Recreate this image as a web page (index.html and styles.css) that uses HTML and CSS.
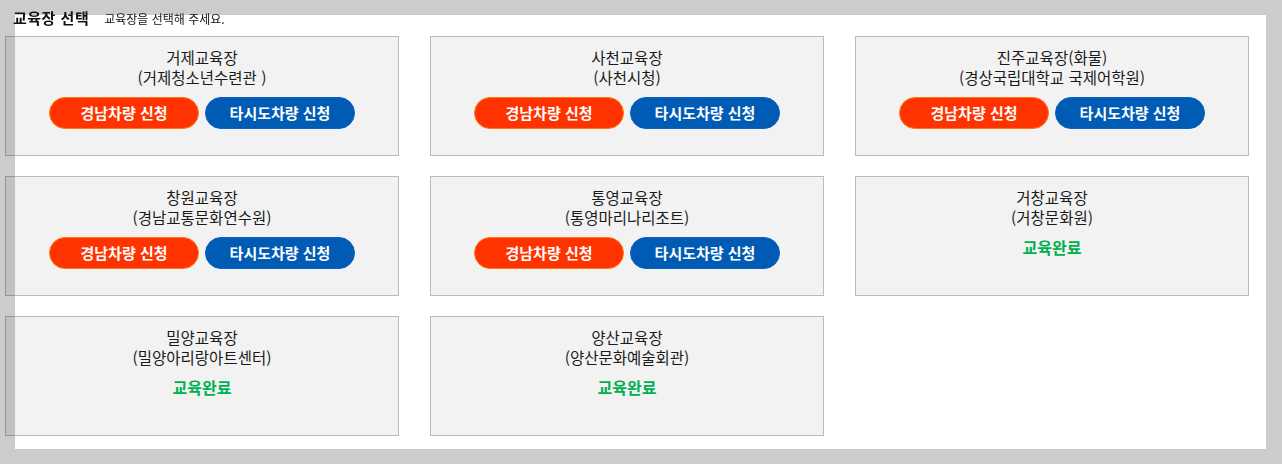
FILE: index.html
```html
<!DOCTYPE html>
<html lang="ko">
<head>
<meta charset="utf-8">
<title>교육장 선택</title>
<link rel="stylesheet" href="styles.css">
</head>
<body>
<div class="page">
  <div class="head">
    <h1 class="head-title">교육장 선택</h1>
    <span class="head-sub">교육장을 선택해 주세요.</span>
  </div>
  <div class="grid">
    <div class="card">
      <div class="name">거제교육장<br>(거제청소년수련관 )</div>
      <div class="actions"><a class="btn btn-orange">경남차량 신청</a><a class="btn btn-blue">타시도차량 신청</a></div>
    </div>
    <div class="card">
      <div class="name">사천교육장<br>(사천시청)</div>
      <div class="actions"><a class="btn btn-orange">경남차량 신청</a><a class="btn btn-blue">타시도차량 신청</a></div>
    </div>
    <div class="card">
      <div class="name">진주교육장(화물)<br>(경상국립대학교 국제어학원)</div>
      <div class="actions"><a class="btn btn-orange">경남차량 신청</a><a class="btn btn-blue">타시도차량 신청</a></div>
    </div>
    <div class="card">
      <div class="name">창원교육장<br>(경남교통문화연수원)</div>
      <div class="actions"><a class="btn btn-orange">경남차량 신청</a><a class="btn btn-blue">타시도차량 신청</a></div>
    </div>
    <div class="card">
      <div class="name">통영교육장<br>(통영마리나리조트)</div>
      <div class="actions"><a class="btn btn-orange">경남차량 신청</a><a class="btn btn-blue">타시도차량 신청</a></div>
    </div>
    <div class="card">
      <div class="name">거창교육장<br>(거창문화원)</div>
      <div class="done">교육완료</div>
    </div>
    <div class="card">
      <div class="name">밀양교육장<br>(밀양아리랑아트센터)</div>
      <div class="done">교육완료</div>
    </div>
    <div class="card">
      <div class="name">양산교육장<br>(양산문화예술회관)</div>
      <div class="done">교육완료</div>
    </div>
  </div>
</div>
<div class="frame"></div>
</body>
</html>
```

FILE: styles.css
```css
html, body {
  margin: 0;
  padding: 0;
  background: #ffffff;
}
body {
  font-family: "Noto Sans CJK KR", "Noto Sans", sans-serif;
  color: #111;
}
.page {
  padding: 8px 0 0 5px;
}
.head {
  position: relative;
  z-index: 2;
  display: flex;
  align-items: baseline;
  height: 20px;
  padding-left: 8px;
  margin-bottom: 8px;
}
.head-title {
  margin: 0;
  font-size: 15px;
  font-weight: 700;
  line-height: 20px;
  letter-spacing: 0.5px;
}
.head-sub {
  margin-left: 15px;
  font-size: 12px;
  line-height: 20px;
}
.grid {
  display: grid;
  grid-template-columns: repeat(3, 394px);
  column-gap: 31px;
  row-gap: 20px;
}
.card {
  box-sizing: border-box;
  height: 120px;
  background: #f2f2f2;
  border: 1px solid #bbbbbb;
  padding-top: 10px;
  text-align: center;
}
.name {
  font-size: 15.5px;
  line-height: 20px;
  color: #1a1a1a;
}
.actions {
  display: flex;
  justify-content: center;
  gap: 6px;
  margin-top: 10px;
}
.btn {
  box-sizing: border-box;
  display: flex;
  align-items: center;
  justify-content: center;
  width: 150px;
  height: 32px;
  padding-bottom: 2px;
  border-radius: 16px;
  color: #ffffff;
  font-size: 15px;
  font-weight: 700;
  text-decoration: none;
}
.btn-orange {
  background: #ff3300;
  border: 1px solid #ff7a1a;
}
.btn-blue {
  background: #005bb5;
  border: 1px solid #0a63bd;
}
.done {
  margin-top: 10px;
  font-size: 16px;
  line-height: 20px;
  font-weight: 700;
  color: #00b050;
}
.frame {
  position: fixed;
  inset: 0;
  z-index: 1;
  pointer-events: none;
  border-style: solid;
  border-color: rgba(0, 0, 0, 0.2);
  border-width: 15px 16px 15px 15px;
}
```
